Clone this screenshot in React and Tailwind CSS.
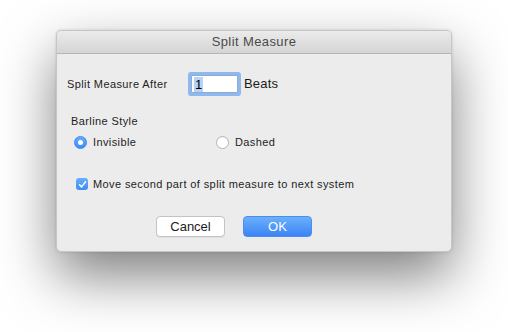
import { useState } from 'react';

const Radio = ({ checked, label, onClick, className = '' }) => (
    <button type="button" onClick={onClick} className={`flex items-center gap-[6px] ${className}`}>
        {checked ? (
            <span className="w-[13px] h-[13px] rounded-full bg-gradient-to-b from-[#69aefb] to-[#3b8cf5] border border-[#3a86ee] flex items-center justify-center">
                <span className="w-[5px] h-[5px] rounded-full bg-white"></span>
            </span>
        ) : (
            <span className="w-[13px] h-[13px] rounded-full bg-white border border-[#b4b4b4] shadow-[inset_0_1px_1px_rgba(0,0,0,0.05)]"></span>
        )}
        <span className="text-[11px] leading-[14px] tracking-[0.4px] text-[#1e1e1e]">{label}</span>
    </button>
);

const App = () => {
    const [style, setStyle] = useState('invisible');
    const [moveNext, setMoveNext] = useState(true);

    return (
        <div className="w-[508px] h-[332px] bg-white overflow-hidden font-['Liberation_Sans',Arial,sans-serif]">
            <div className="ml-[56px] mt-[30px] w-[396px] h-[222px] rounded-[5px] bg-[#ececec] border border-[#c6c6c6] shadow-[0_24px_55px_rgba(0,0,0,0.5),0_0_3px_rgba(0,0,0,0.15)] overflow-hidden flex flex-col">

                {/* Title bar */}
                <div className="h-[23px] shrink-0 bg-gradient-to-b from-[#ebebeb] to-[#d5d5d5] border-b border-[#b5b5b5] flex items-center justify-center">
                    <span className="text-[13px] tracking-[0.4px] text-[#4a4a4a]">Split Measure</span>
                </div>

                {/* Split after */}
                <div className="mt-[18px] h-[24px] flex items-center pl-[10px]">
                    <span className="w-[124px] text-[11px] tracking-[0.4px] text-[#1e1e1e]">Split Measure After</span>
                    <div className="w-[47px] h-[18px] bg-white border border-[#8fa9cf] rounded-[1px] shadow-[0_0_0_3px_#8db8f0] flex items-center pl-[2px]">
                        <span className="bg-[#b5d3f7] text-[13px] leading-[15px] text-black px-[1px]">1</span>
                    </div>
                    <span className="ml-[6px] text-[13px] tracking-[0.2px] text-[#1a1a1a]">Beats</span>
                </div>

                {/* Barline style */}
                <div className="mt-[18px] pl-[14px] text-[11px] leading-[14px] tracking-[0.4px] text-[#1e1e1e]">Barline Style</div>
                <div className="mt-[7px] pl-[17px] flex items-center">
                    <Radio checked={style === 'invisible'} label="Invisible" onClick={() => setStyle('invisible')} className="w-[142px]" />
                    <Radio checked={style === 'dashed'} label="Dashed" onClick={() => setStyle('dashed')} />
                </div>

                {/* Move to next system */}
                <button type="button" onClick={() => setMoveNext(!moveNext)} className="mt-[28px] pl-[19px] flex items-center gap-[5px]">
                    {moveNext ? (
                        <span className="w-[12px] h-[12px] rounded-[3px] bg-gradient-to-b from-[#69aefb] to-[#3b8cf5] flex items-center justify-center">
                            <svg width="9" height="9" viewBox="0 0 9 9" fill="none">
                                <path d="M1.5 4.8 L3.6 6.9 L7.6 1.8" stroke="white" strokeWidth="1.5" strokeLinecap="round" strokeLinejoin="round" />
                            </svg>
                        </span>
                    ) : (
                        <span className="w-[12px] h-[12px] rounded-[3px] bg-white border border-[#b4b4b4]"></span>
                    )}
                    <span className="text-[11px] leading-[14px] tracking-[0.4px] text-[#1e1e1e]">Move second part of split measure to next system</span>
                </button>

                {/* Buttons */}
                <div className="mt-[25px] pl-[99px] flex gap-[18px]">
                    <button type="button" className="w-[69px] h-[21px] rounded-[4px] bg-white border border-[#c3c3c3] shadow-[0_1px_0_rgba(0,0,0,0.05)] text-[13px] text-[#1a1a1a]">Cancel</button>
                    <button type="button" className="w-[69px] h-[21px] rounded-[4px] bg-gradient-to-b from-[#6cb0fb] to-[#3c83f6] border border-[#4a8cf0] text-[13px] text-white">OK</button>
                </div>
            </div>
        </div>
    );
};

export default App;
